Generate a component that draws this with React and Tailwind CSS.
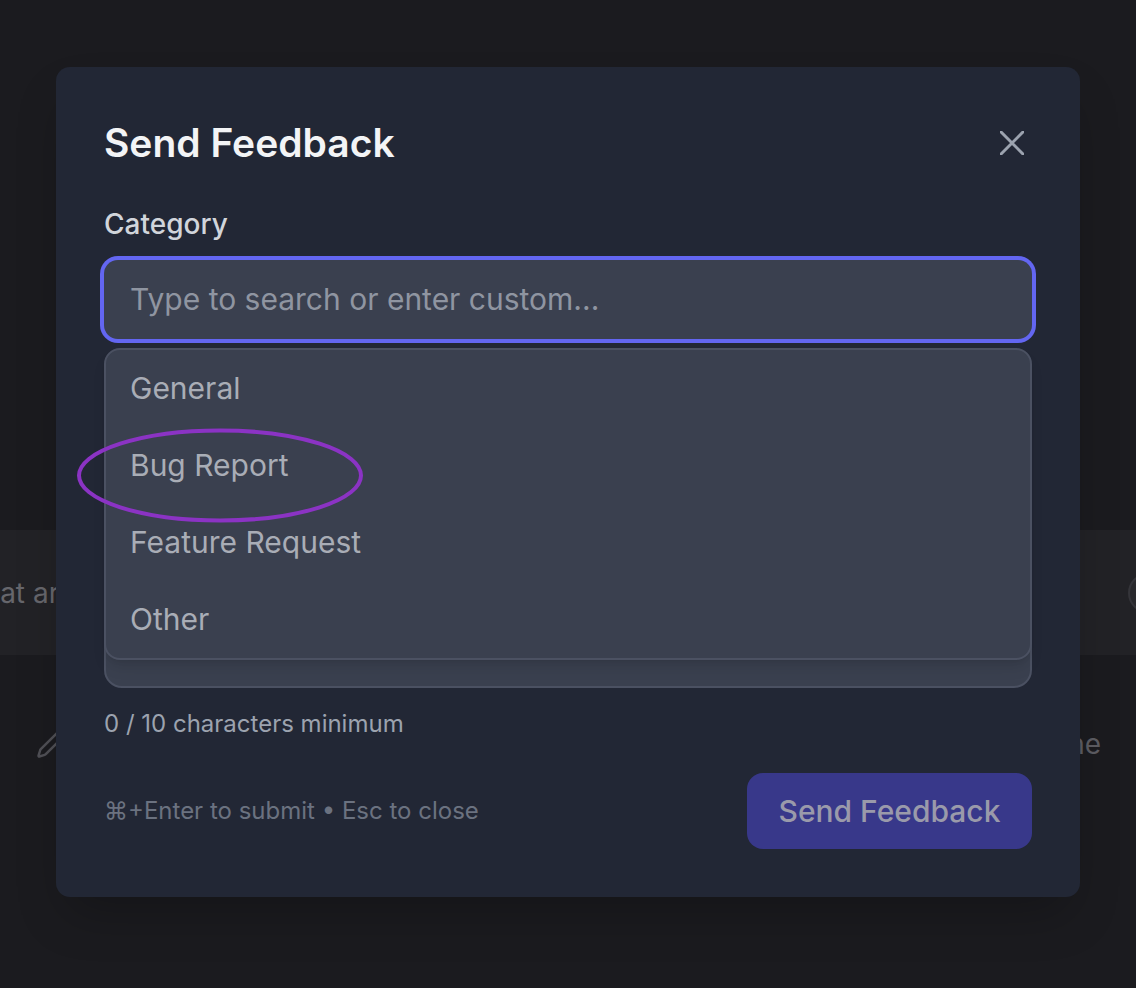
const CATEGORIES = ['General', 'Bug Report', 'Feature Request', 'Other']

export default function App() {
  return (
    <div
      className="relative h-[988px] w-[1136px] overflow-hidden bg-[#1b1b1f]"
      style={{ fontFamily: 'Inter, "Noto Sans", sans-serif' }}
    >
      <BackgroundPage />
      <FeedbackModal />
      {/* annotation drawn over the screenshot */}
      <svg
        className="pointer-events-none absolute left-[77px] top-[428px] z-20"
        width="286"
        height="95"
        viewBox="0 0 286 95"
      >
        <ellipse cx="143" cy="47.5" rx="141" ry="45" fill="none" stroke="#8b33c4" strokeWidth="4" />
      </svg>
    </div>
  )
}

function BackgroundPage() {
  return (
    <div className="flex flex-col">
      <div className="h-[530px]" />
      <div className="flex h-[125px] items-center justify-between bg-[#222226]">
        <span className="-ml-[44px] whitespace-nowrap text-[28px] text-[#66666c]">What are you working on?</span>
        <span className="-mr-[32px] h-[40px] w-[40px] rounded-full border-2 border-[#35353a] bg-[#29292d]" />
      </div>
      <div className="mt-[68px] flex items-center justify-between pl-[36px] pr-[35px]">
        <PencilIcon className="h-[30px] w-[30px] text-[#505056]" />
        <span className="text-[28px] text-[#5d5d63]">Timeline</span>
      </div>
    </div>
  )
}

function FeedbackModal() {
  return (
    <div className="absolute left-[56px] top-[67px] flex h-[830px] w-[1024px] flex-col rounded-[14px] bg-[#222735] p-12 shadow-2xl">
      <div className="flex items-center justify-between">
        <h2 className="text-[39px] font-semibold leading-[56px] text-[#f3f4f6]">Send Feedback</h2>
        <button type="button" aria-label="Close" className="flex h-[40px] w-[40px] items-center justify-center">
          <svg width="24" height="24" viewBox="0 0 24 24" fill="none" stroke="#9ca3af" strokeWidth="3" strokeLinecap="round">
            <path d="M1 1l22 22M23 1L1 23" />
          </svg>
        </button>
      </div>

      <div className="relative mt-[33px]">
        <label className="block text-[28px] font-medium leading-[40px] text-[#d1d5db]">Category</label>
        <div className="mt-[16px] flex h-[79px] items-center rounded-[14px] bg-[#3a404f] px-[26px] ring-4 ring-[#6366f1]">
          <span className="text-[30px] text-[#8f95a1]">Type to search or enter custom...</span>
        </div>
        <div className="absolute left-0 right-0 top-[144px] z-10 rounded-[16px] border-2 border-[#4b5162] bg-[#3a404f] shadow-lg">
          {CATEGORIES.map((c) => (
            <div key={c} className="flex h-[77px] items-center px-[24px] text-[30px] text-[#a9adb6]">
              {c}
            </div>
          ))}
        </div>
      </div>

      <div className="mt-[48px]">
        <label className="block text-[28px] font-medium leading-[40px] text-[#d1d5db]">Message</label>
        <div className="mt-[16px] h-[245px] rounded-[18px] border-2 border-[#4b5162] bg-[#3a404f]" />
      </div>

      <p className="mt-[20px] text-[24px] leading-[32px] text-[#9ca3af]">0 / 10 characters minimum</p>

      <div className="mt-[33px] flex items-center justify-between">
        <span className="text-[24px] text-[#6b7280]">⌘+Enter to submit • Esc to close</span>
        <button
          type="button"
          disabled
          className="flex h-[76px] w-[285px] items-center justify-center rounded-[16px] bg-[#38388a] text-[30px] font-medium text-[#9a9aaa]"
        >
          Send Feedback
        </button>
      </div>
    </div>
  )
}

function PencilIcon({ className }) {
  return (
    <svg className={className} viewBox="0 0 24 24" fill="none" stroke="currentColor" strokeWidth="2" strokeLinecap="round" strokeLinejoin="round">
      <path d="M21.174 6.812a1 1 0 0 0-3.986-3.987L3.842 16.174a2 2 0 0 0-.5.83l-1.321 4.352a.5.5 0 0 0 .623.622l4.353-1.32a2 2 0 0 0 .83-.497z" />
    </svg>
  )
}
